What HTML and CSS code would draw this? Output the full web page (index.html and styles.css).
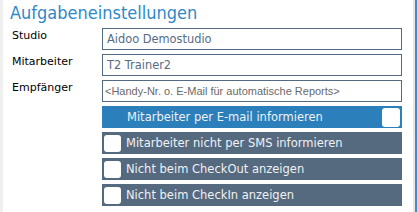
FILE: index.html
```html
<!DOCTYPE html>
<html>
<head>
<meta charset="utf-8">
<link rel="stylesheet" href="styles.css">
</head>
<body>
<div class="frame">
  <div class="edge-left"></div>
  <main class="panel">
    <h1 class="title">Aufgabeneinstellungen</h1>
    <div class="form">
      <label class="label">Studio</label>
      <div class="input">Aidoo Demostudio</div>
      <label class="label">Mitarbeiter</label>
      <div class="input">T2 Trainer2</div>
      <label class="label">Empfänger</label>
      <div class="input placeholder">&lt;Handy-Nr. o. E-Mail für automatische Reports&gt;</div>
      <div class="toggles">
        <div class="toggle on"><span class="toggle-text">Mitarbeiter per E-mail informieren</span><span class="knob"></span></div>
        <div class="toggle"><span class="knob"></span><span class="toggle-text">Mitarbeiter nicht per SMS informieren</span></div>
        <div class="toggle"><span class="knob"></span><span class="toggle-text">Nicht beim CheckOut anzeigen</span></div>
        <div class="toggle"><span class="knob"></span><span class="toggle-text">Nicht beim CheckIn anzeigen</span></div>
      </div>
    </div>
  </main>
  <div class="edge-right"></div>
  <div class="edge-blue"></div>
</div>
</body>
</html>
```
FILE: styles.css
```css
html, body {
  margin: 0;
  padding: 0;
  background: #ffffff;
}
.frame {
  display: flex;
  width: 417px;
  height: 212px;
  overflow: hidden;
}
.edge-left {
  width: 3px;
  background: #efefef;
}
.panel {
  width: 410px;
  padding: 2px 0 0 0;
  box-sizing: border-box;
}
.edge-right {
  width: 2px;
  background: #e6e6e6;
}
.edge-blue {
  width: 2px;
  background: #3a8fd0;
}
.title {
  margin: 0 0 4px 7px;
  font-family: "DejaVu Sans Condensed", "DejaVu Sans", Verdana, sans-serif;
  font-weight: normal;
  font-size: 18px;
  line-height: 22px;
  color: #2f88c8;
}
.form {
  display: grid;
  grid-template-columns: 90px 300px;
  row-gap: 4px;
  padding-left: 9px;
}
.label {
  font-family: "DejaVu Sans", Verdana, sans-serif;
  font-size: 11px;
  line-height: 16px;
  color: #000;
}
.input {
  height: 22px;
  box-sizing: border-box;
  border: 1px solid #536a82;
  padding: 0 4px;
  font-family: "DejaVu Sans", Verdana, sans-serif;
  font-size: 11.4px;
  line-height: 20px;
  color: #566c84;
  white-space: nowrap;
  overflow: hidden;
}
.input.placeholder {
  padding: 0 2px;
  font-family: "Liberation Sans", Arial, sans-serif;
  font-size: 11px;
  color: #6a6a6a;
}
.toggles {
  grid-column: 2;
  display: flex;
  flex-direction: column;
  gap: 4px;
}
.toggle {
  display: flex;
  align-items: center;
  height: 22px;
  background: #55697f;
  padding: 0 2px;
  font-family: "DejaVu Sans", Verdana, sans-serif;
  font-size: 11.5px;
  line-height: 22px;
  color: #eef2f6;
  white-space: nowrap;
}
.toggle.on {
  background: #2b7fba;
  justify-content: space-between;
}
.knob {
  width: 17px;
  height: 17px;
  background: #ffffff;
  border-radius: 3px;
  margin-right: 5px;
}
.toggle.on .knob {
  width: 18px;
  height: 19px;
  margin-right: 0;
}
.toggle.on .toggle-text {
  margin-left: 23px;
}
```
